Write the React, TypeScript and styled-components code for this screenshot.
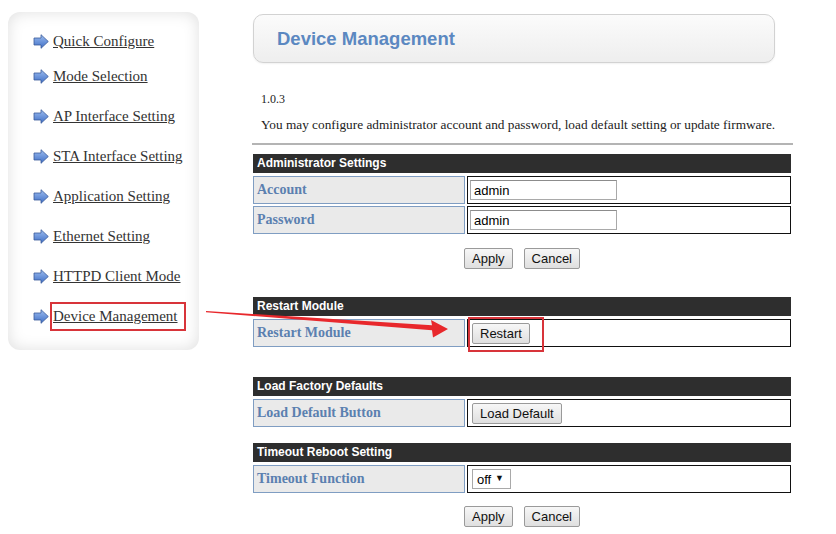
import styled, { createGlobalStyle } from "styled-components";

const GlobalStyle = createGlobalStyle`
  body {
    margin: 0;
    background: #fff;
    font-family: "Liberation Serif", "Times New Roman", serif;
    color: #333;
  }
`;

const Page = styled.div`
  position: relative;
  display: flex;
  align-items: flex-start;
  gap: 54px;
  width: 836px;
  height: 534px;
  padding: 12px 0 0 8px;
  box-sizing: border-box;
  overflow: hidden;
`;

const Sidebar = styled.nav`
  width: 191px;
  height: 338px;
  box-sizing: border-box;
  padding: 9px 0 0 25px;
  border-radius: 12px;
  background: #fff;
  box-shadow: inset 0 0 16px rgba(0, 0, 0, 0.13);
`;

const MenuList = styled.ul`
  list-style: none;
  margin: 0;
  padding: 0;
`;

const MenuItem = styled.li`
  display: flex;
  align-items: center;
  gap: 4px;
  height: 40px;
  &:first-child {
    margin-bottom: -5px;
  }
`;

const MenuLink = styled.a<{ $highlight?: boolean }>`
  display: inline-block;
  font-size: 15px;
  line-height: 17px;
  color: #333;
  text-decoration: underline;
  padding: 4px 6px 4px 1px;
  margin-left: -1px;
  outline: ${(p) => (p.$highlight ? "2px solid #d8343a" : "none")};
`;

const Main = styled.main`
  width: 538px;
  display: flex;
  flex-direction: column;
  padding-top: 2px;
`;

const TitlePanel = styled.div`
  width: 522px;
  height: 49px;
  box-sizing: border-box;
  border: 1px solid #d2d2d2;
  border-radius: 10px;
  background: linear-gradient(#fbfbfb, #eeeeee);
  box-shadow: 0 1px 2px rgba(0, 0, 0, 0.06);
  display: flex;
  align-items: center;
  padding-left: 23px;
`;

const Title = styled.h1`
  margin: 0;
  font-family: "Liberation Sans", Arial, sans-serif;
  font-size: 18.5px;
  font-weight: bold;
  color: #5b88c1;
`;

const Version = styled.p`
  margin: 28px 0 0 8px;
  font-size: 12px;
  line-height: 16px;
  color: #222;
`;

const Intro = styled.p`
  margin: 10px 0 0 8px;
  font-size: 13.3px;
  line-height: 16px;
  color: #222;
`;

const Rule = styled.hr`
  margin: 10px 0 0 -1px;
  border: 0;
  border-top: 2px solid #b4b4b4;
  width: 541px;
`;

const Section = styled.section<{ $gap: number }>`
  margin-top: ${(p) => p.$gap}px;
  display: grid;
  grid-template-columns: 212px 1fr;
  column-gap: 2px;
  row-gap: 2px;
`;

const SectionHead = styled.div`
  grid-column: 1 / -1;
  height: 19px;
  margin-bottom: 1px;
  background: #2e2e2e;
  color: #fff;
  font-family: "Liberation Sans", Arial, sans-serif;
  font-weight: bold;
  font-size: 12px;
  line-height: 19px;
  padding-left: 4px;
`;

const LabelCell = styled.div`
  height: 28px;
  box-sizing: border-box;
  border: 1px solid #7f9dc2;
  background: #eaeaea;
  padding: 5px 0 0 3px;
  font-size: 14px;
  font-weight: bold;
  color: #5b80b0;
`;

const ValueCell = styled.div`
  position: relative;
  height: 28px;
  box-sizing: border-box;
  border: 1px solid #111;
  display: flex;
  align-items: center;
  padding-left: 4px;
`;

const TextInput = styled.input`
  width: 147px;
  height: 20px;
  box-sizing: border-box;
  margin: 0 0 0 -2px;
  border: 1px solid #a9a9a9;
  border-top-color: #8c8c8c;
  padding: 0 3px;
  font-family: "Liberation Sans", Arial, sans-serif;
  font-size: 13px;
  color: #000;
  outline: none;
`;

const Button = styled.button`
  height: 21px;
  box-sizing: border-box;
  padding: 0 7px;
  border: 1px solid #9a9a9a;
  border-radius: 2px;
  background: linear-gradient(#f7f7f7, #dfdfdf);
  font-family: "Liberation Sans", Arial, sans-serif;
  font-size: 13px;
  color: #111;
`;

const Actions = styled.div<{ $gap: number }>`
  margin-top: ${(p) => p.$gap}px;
  display: flex;
  justify-content: center;
  gap: 11px;
`;

const SelectWrap = styled.span`
  position: relative;
  display: inline-flex;
`;

const Select = styled.select`
  appearance: none;
  width: 39px;
  height: 20px;
  box-sizing: border-box;
  border: 1px solid #a9a9a9;
  border-radius: 0;
  background: #fff;
  padding: 0 0 0 4px;
  font-family: "Liberation Sans", Arial, sans-serif;
  font-size: 13px;
  color: #000;
`;

const Caret = styled.span`
  position: absolute;
  right: 7px;
  top: 5px;
  font-size: 9px;
  line-height: 9px;
  color: #111;
  pointer-events: none;
`;

const Callout = styled.span`
  position: absolute;
  left: 0;
  top: -3px;
  width: 76px;
  height: 35px;
  box-sizing: border-box;
  border: 2px solid #d8343a;
  pointer-events: none;
`;

const Annotation = styled.svg`
  position: absolute;
  left: 0;
  top: 0;
  pointer-events: none;
`;

const menu = [
  "Quick Configure",
  "Mode Selection",
  "AP Interface Setting",
  "STA Interface Setting",
  "Application Setting",
  "Ethernet Setting",
  "HTTPD Client Mode",
  "Device Management",
];

function MenuArrow() {
  return (
    <svg width="16" height="15" viewBox="0 0 16 15">
      <defs>
        <linearGradient id="ma" x1="0" y1="0" x2="0" y2="1">
          <stop offset="0" stopColor="#9dbdf0" />
          <stop offset="1" stopColor="#3f6fc6" />
        </linearGradient>
      </defs>
      <polygon
        points="1,4 8,4 8,0.7 15.3,7.5 8,14.3 8,11 1,11"
        fill="url(#ma)"
        stroke="#3b5c9a"
        strokeWidth="0.8"
        strokeLinejoin="round"
      />
    </svg>
  );
}

export default function App() {
  return (
    <>
      <GlobalStyle />
      <Page>
        <Sidebar>
          <MenuList>
            {menu.map((m, i) => (
              <MenuItem key={m}>
                <MenuArrow />
                <MenuLink href="#" $highlight={i === menu.length - 1}>
                  {m}
                </MenuLink>
              </MenuItem>
            ))}
          </MenuList>
        </Sidebar>

        <Main>
          <TitlePanel>
            <Title>Device Management</Title>
          </TitlePanel>
          <Version>1.0.3</Version>
          <Intro>You may configure administrator account and password, load default setting or update firmware.</Intro>
          <Rule />

          <Section $gap={9}>
            <SectionHead>Administrator Settings</SectionHead>
            <LabelCell>Account</LabelCell>
            <ValueCell>
              <TextInput defaultValue="admin" />
            </ValueCell>
            <LabelCell>Password</LabelCell>
            <ValueCell>
              <TextInput defaultValue="admin" />
            </ValueCell>
          </Section>
          <Actions $gap={14}>
            <Button>Apply</Button>
            <Button>Cancel</Button>
          </Actions>

          <Section $gap={28}>
            <SectionHead>Restart Module</SectionHead>
            <LabelCell>Restart Module</LabelCell>
            <ValueCell>
              <Button>Restart</Button>
              <Callout />
            </ValueCell>
          </Section>

          <Section $gap={30}>
            <SectionHead>Load Factory Defaults</SectionHead>
            <LabelCell>Load Default Button</LabelCell>
            <ValueCell>
              <Button>Load Default</Button>
            </ValueCell>
          </Section>

          <Section $gap={16}>
            <SectionHead>Timeout Reboot Setting</SectionHead>
            <LabelCell>Timeout Function</LabelCell>
            <ValueCell>
              <SelectWrap>
                <Select defaultValue="off">
                  <option value="off">off</option>
                  <option value="on">on</option>
                </Select>
                <Caret>▼</Caret>
              </SelectWrap>
            </ValueCell>
          </Section>
          <Actions $gap={13}>
            <Button>Apply</Button>
            <Button>Cancel</Button>
          </Actions>
        </Main>

        <Annotation width="836" height="534" viewBox="0 0 836 534">
          <polygon
            points="206,311 432,325.3 431,320 448,329 433,337.5 432,330.3 206,312.2"
            fill="#e8282c"
          />
        </Annotation>
      </Page>
    </>
  );
}
